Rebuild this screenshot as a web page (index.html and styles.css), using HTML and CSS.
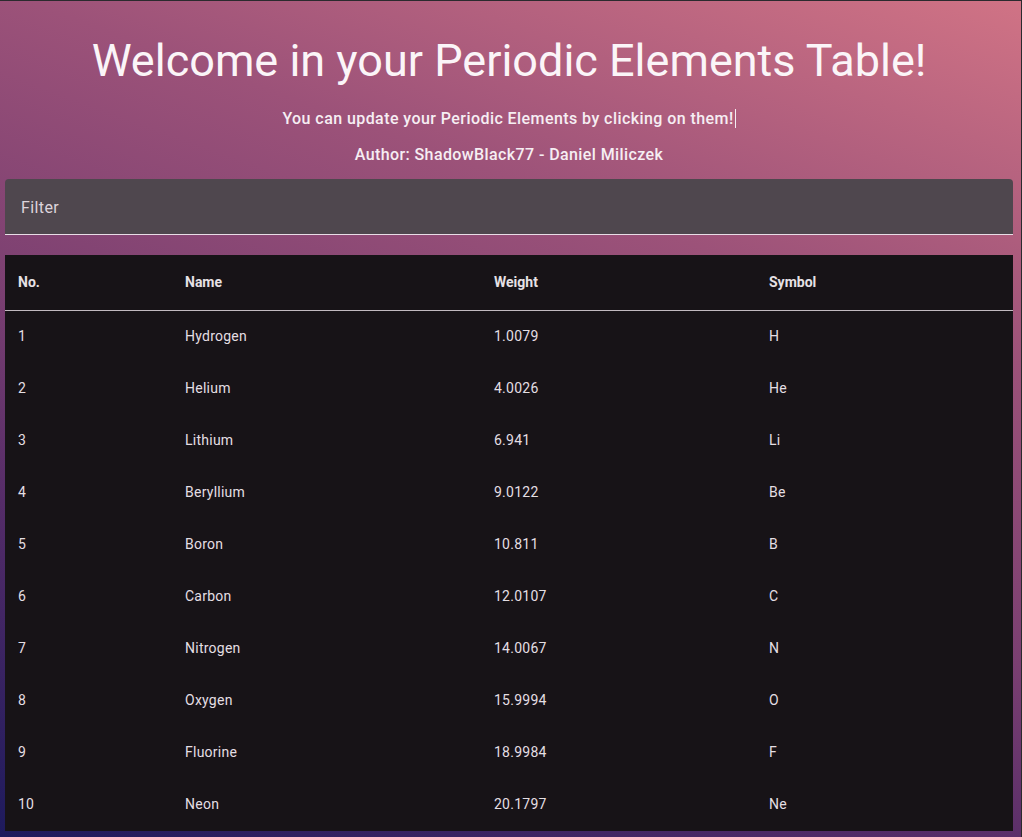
FILE: index.html
```html
<!DOCTYPE html>
<html lang="en">
<head>
<meta charset="utf-8">
<title>Periodic Elements Table</title>
<link rel="stylesheet" href="styles.css">
</head>
<body>
<div class="page">
  <header class="hero">
    <h1 class="title">Welcome in your Periodic Elements Table!</h1>
    <p class="subtitle">You can update your Periodic Elements by clicking on them!<span class="caret"></span></p>
    <p class="author">Author: ShadowBlack77 - Daniel Miliczek</p>
  </header>

  <div class="filter">
    <span class="filter-label">Filter</span>
  </div>

  <div class="table">
    <div class="row head">
      <div class="cell">No.</div><div class="cell">Name</div><div class="cell">Weight</div><div class="cell">Symbol</div>
    </div>
    <div class="row"><div class="cell">1</div><div class="cell">Hydrogen</div><div class="cell">1.0079</div><div class="cell">H</div></div>
    <div class="row"><div class="cell">2</div><div class="cell">Helium</div><div class="cell">4.0026</div><div class="cell">He</div></div>
    <div class="row"><div class="cell">3</div><div class="cell">Lithium</div><div class="cell">6.941</div><div class="cell">Li</div></div>
    <div class="row"><div class="cell">4</div><div class="cell">Beryllium</div><div class="cell">9.0122</div><div class="cell">Be</div></div>
    <div class="row"><div class="cell">5</div><div class="cell">Boron</div><div class="cell">10.811</div><div class="cell">B</div></div>
    <div class="row"><div class="cell">6</div><div class="cell">Carbon</div><div class="cell">12.0107</div><div class="cell">C</div></div>
    <div class="row"><div class="cell">7</div><div class="cell">Nitrogen</div><div class="cell">14.0067</div><div class="cell">N</div></div>
    <div class="row"><div class="cell">8</div><div class="cell">Oxygen</div><div class="cell">15.9994</div><div class="cell">O</div></div>
    <div class="row"><div class="cell">9</div><div class="cell">Fluorine</div><div class="cell">18.9984</div><div class="cell">F</div></div>
    <div class="row"><div class="cell">10</div><div class="cell">Neon</div><div class="cell">20.1797</div><div class="cell">Ne</div></div>
  </div>
</div>
</body>
</html>
```

FILE: styles.css
```css
html, body {
  margin: 0;
  padding: 0;
  height: 100%;
}

body {
  background: #2b2a2e;
  font-family: Roboto, "Liberation Sans", sans-serif;
  overflow: hidden;
}

.page {
  box-sizing: border-box;
  height: 100%;
  margin: 1px 1px 0 0;
  padding: 32px 8px 0 5px;
  background: linear-gradient(200deg, #d07385 0%, #9c5279 30%, #7a3f71 55%, #552c68 72%, #1d1a5c 100%);
  color: #ffffff;
}

.hero {
  text-align: center;
}

.title {
  margin: 0 0 18px;
  font-size: 45px;
  line-height: 56px;
  font-weight: 400;
  color: #fbf5f8;
}

.subtitle {
  margin: 0 0 12px;
  font-size: 16px;
  line-height: 24px;
  font-weight: 500;
  letter-spacing: 0.43px;
  color: #f6eef3;
}

.caret {
  display: inline-block;
  width: 1px;
  height: 19px;
  margin-left: 1px;
  vertical-align: -4px;
  background: #f4eef2;
}

.author {
  margin: 0 0 12px;
  font-size: 16px;
  line-height: 24px;
  font-weight: 500;
  letter-spacing: 0.4px;
  color: #f6eef3;
}

.filter {
  height: 55px;
  display: flex;
  align-items: center;
  padding-left: 16px;
  background: #4f474e;
  border-radius: 4px 4px 0 0;
  border-bottom: 1px solid #e9dde6;
}

.filter-label {
  font-size: 16px;
  letter-spacing: 0.4px;
  color: #ddd4db;
  padding-top: 2px;
}

.table {
  margin-top: 20px;
  background: #171317;
}

.row {
  display: grid;
  grid-template-columns: 167px 309px 275px 1fr;
  height: 52px;
  align-items: center;
}

.row.head {
  height: 55px;
  border-bottom: 1px solid #c2bac0;
}

.cell {
  padding-left: 13px;
  padding-bottom: 2px;
  font-size: 14px;
  letter-spacing: 0.25px;
  color: #e4dfe3;
}

.head .cell {
  font-weight: 700;
  letter-spacing: 0;
  color: #e6e1e5;
}
```
